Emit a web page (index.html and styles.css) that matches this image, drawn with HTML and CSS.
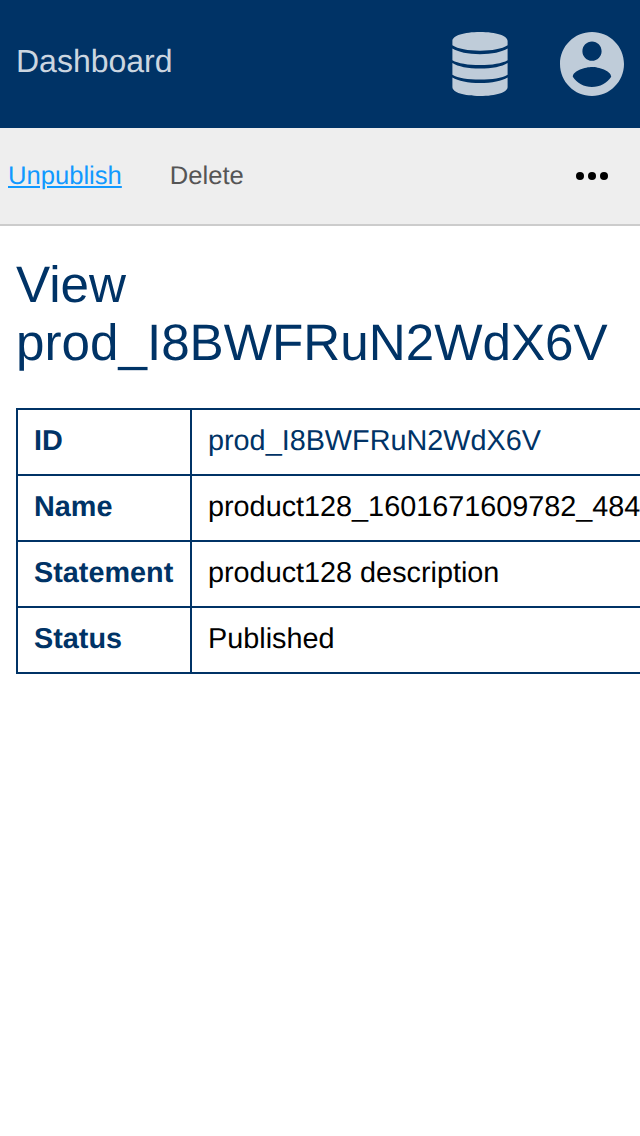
FILE: index.html
```html
<!DOCTYPE html>
<html lang="en">
<head>
<meta charset="utf-8">
<title>View product</title>
<link rel="stylesheet" href="styles.css">
</head>
<body>
<header class="topbar">
  <a class="brand">Dashboard</a>
  <svg class="icon database" viewBox="0 0 56 64"><path d="M.4 9C.4 3.500 12 0 28 0s27.600 3.500 27.600 9v4.300C50 17 40 18.700 28 18.700S6 17 .4 13.300zM.4 16.500C6 20 16 22.200 28 22.200s22-2.200 27.600-5.700v11.800C50 31.500 40 33.100 28 33.100S6 31.500.4 28.300zM.4 31C6 34.600 16 36.600 28 36.600s22-2 27.600-5.600v11.700C50 46 40 47.500 28 47.500S6 46 .4 42.700zM.4 45.500C6 49 16 51 28 51s22-2 27.600-5.500V55C55.600 60.500 44 64 28 64S.4 60.500.4 55z"/></svg>
  <svg class="icon account" viewBox="2 2 20 20"><path d="M12 2C6.480 2 2 6.480 2 12s4.480 10 10 10 10-4.480 10-10S17.520 2 12 2zm0 3c1.660 0 3 1.340 3 3s-1.340 3-3 3-3-1.340-3-3 1.340-3 3-3zm0 14.200c-2.500 0-4.710-1.280-6-3.220.03-1.990 4-3.080 6-3.080 1.990 0 5.970 1.090 6 3.080-1.290 1.940-3.500 3.220-6 3.220z"/></svg>
</header>
<nav class="actions">
  <a class="action active">Unpublish</a>
  <a class="action">Delete</a>
  <svg class="more" viewBox="0 0 32 8"><circle cx="4" cy="4" r="4"/><circle cx="16" cy="4" r="4"/><circle cx="28" cy="4" r="4"/></svg>
</nav>
<main class="content">
  <h1 class="title">View prod_I8BWFRuN2WdX6V</h1>
  <table class="details">
    <tr><th>ID</th><td class="identifier">prod_I8BWFRuN2WdX6V</td></tr>
    <tr><th>Name</th><td>product128_1601671609782_484</td></tr>
    <tr><th>Statement</th><td>product128 description</td></tr>
    <tr><th>Status</th><td>Published</td></tr>
  </table>
</main>
</body>
</html>
```
FILE: styles.css
```css
body {
  margin: 0;
  background: #fff;
  color: #000;
  font-family: "Liberation Sans", Arial, sans-serif;
  text-rendering: geometricPrecision;
  overflow: hidden;
}
.topbar {
  display: flex;
  align-items: center;
  box-sizing: border-box;
  height: 128px;
  padding: 0 16px;
  background: #003366;
}
.brand {
  margin: 0 auto 6px 0;
  color: #ccd6e0;
  font-size: 32px;
  line-height: 36px;
}
.icon {
  display: block;
  height: 64px;
  fill: #bfccd9;
}
.database { width: 56px; margin-right: 52px; }
.account { width: 64px; }
.actions {
  display: flex;
  align-items: center;
  box-sizing: border-box;
  height: 98px;
  padding: 0 32px 0 8px;
  border-bottom: 2px solid #ccc;
  background: #eee;
}
.action {
  margin: 0 48px 0 0;
  color: #555;
  font-size: 25.6px;
  line-height: 30px;
}
.active { color: #1199ff; text-decoration: underline; }
.more { width: 32px; height: 8px; margin-left: auto; }
.content { padding: 30px 16px; }
.title {
  margin: 0 0 36px;
  color: #003366;
  font-size: 51.2px;
  font-weight: 400;
  line-height: 58px;
}
.details {
  width: 700px;
  border-collapse: collapse;
  font-size: 28.8px;
  line-height: 32px;
  white-space: nowrap;
}
.details th,
.details td {
  box-sizing: border-box;
  height: 66px;
  padding: 0 16px 2px;
  border: 2px solid #003366;
  text-align: left;
}
.details th { width: 174px; color: #003366; }
.details .identifier { color: #003366; }
```
